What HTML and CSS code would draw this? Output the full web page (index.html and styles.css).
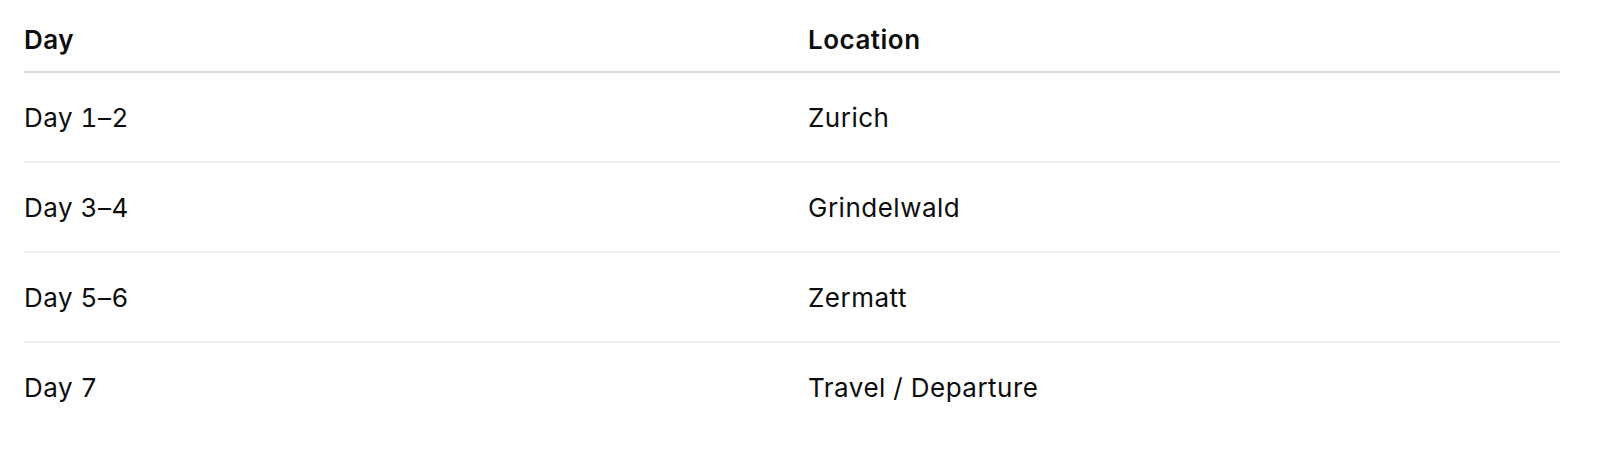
FILE: index.html
```html
<!DOCTYPE html>
<html lang="en">
<head>
<meta charset="utf-8">
<title>Itinerary</title>
<link rel="stylesheet" href="styles.css">
</head>
<body>
<div class="wrap">
  <table class="itinerary">
    <thead>
      <tr><th>Day</th><th>Location</th></tr>
    </thead>
    <tbody>
      <tr><td>Day 1–2</td><td>Zurich</td></tr>
      <tr><td>Day 3–4</td><td>Grindelwald</td></tr>
      <tr><td>Day 5–6</td><td>Zermatt</td></tr>
      <tr><td>Day 7</td><td>Travel / Departure</td></tr>
    </tbody>
  </table>
</div>
</body>
</html>
```
FILE: styles.css
```css
html, body {
  margin: 0;
  padding: 0;
  background: #ffffff;
}
body {
  font-family: Inter, "Noto Sans", "Liberation Sans", sans-serif;
  color: #0d0d0d;
}
.wrap {
  padding: 0 24px;
}
.itinerary {
  width: 1536px;
  border-collapse: collapse;
  table-layout: fixed;
  font-size: 26px;
  line-height: 32px;
  letter-spacing: 0.5px;
  font-variant-numeric: tabular-nums;
}
.itinerary th,
.itinerary td {
  text-align: left;
  padding: 0 16px;
}
.itinerary th:first-child,
.itinerary td:first-child {
  padding-left: 0;
}
.itinerary th {
  font-weight: 600;
  padding-top: 24px;
  padding-bottom: 15px;
  border-bottom: 2px solid #d9d9d9;
}
.itinerary td {
  font-weight: 400;
  padding-top: 29px;
  padding-bottom: 27px;
}
.itinerary tbody tr {
  border-bottom: 2px solid #efefef;
}
.itinerary tbody tr:last-child {
  border-bottom: none;
}
```
